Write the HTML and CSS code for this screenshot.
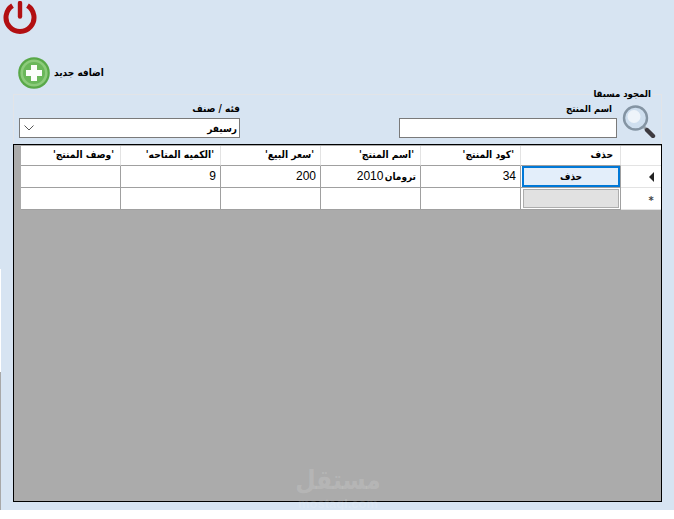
FILE: index.html
```html
<!DOCTYPE html>
<html lang="ar">
<head>
<meta charset="utf-8">
<title>المنتجات</title>
<link rel="stylesheet" href="styles.css">
</head>
<body>
<div class="window">
  <div class="edge"></div>
  <main class="content">
    <svg class="power" viewBox="0 0 34 34" aria-label="خروج">
      <path d="M9.500 4.700A14 14 0 1 0 24.500 4.700" fill="none" stroke="#b20f12" stroke-width="5"/>
      <line x1="17" y1="2" x2="17" y2="15.500" stroke="#b20f12" stroke-width="4.400" stroke-linecap="round"/>
    </svg>
    <div class="add">
      <svg class="add-icon" viewBox="0 0 32 32">
        <circle cx="16" cy="16" r="15.800" fill="#58a848"/>
        <circle cx="16" cy="16" r="13.600" fill="#8ccb7b"/>
        <circle cx="16" cy="16" r="11" fill="#6ab75a"/>
        <path d="M13 8h6v5h5v6h-5v5h-6v-5H8v-6h5z" fill="#fbfdfa"/>
      </svg>
      <span class="add-label" dir="rtl">اضافه جديد</span>
    </div>
    <section class="group">
      <span class="legend" dir="rtl">المجود مسبقا</span>
      <div class="controls">
        <div class="field field-category">
          <label class="label" dir="rtl">فئه / صنف</label>
          <div class="select">
            <svg class="chevron" viewBox="0 0 10 6"><path d="M0.500 0.500L5 5L9.500 0.500" fill="none" stroke="#555" stroke-width="1"/></svg>
            <span dir="rtl">رسيفر</span>
          </div>
        </div>
        <div class="search">
          <div class="field field-name">
            <label class="label label-name" dir="rtl">اسم المنتج</label>
            <div class="input"></div>
          </div>
          <svg class="lens" viewBox="0 0 35 34">
            <line x1="22" y1="23" x2="25" y2="26" stroke="#9aa3ab" stroke-width="3"/>
            <line x1="25" y1="26" x2="31" y2="32" stroke="#3d3a40" stroke-width="4.400" stroke-linecap="round"/>
            <circle cx="13.500" cy="14" r="11.500" fill="#cfdfef" stroke="#8494a3" stroke-width="2.400"/>
            <circle cx="12" cy="12.500" r="6.500" fill="#eef4fa"/>
          </svg>
        </div>
      </div>
    </section>
    <section class="grid-frame">
      <div class="grid">
        <div class="head" dir="rtl">'وصف المنتج'</div>
        <div class="head" dir="rtl">'الكميه المتاحه'</div>
        <div class="head" dir="rtl">'سعر البيع'</div>
        <div class="head" dir="rtl">'اسم المنتج'</div>
        <div class="head" dir="rtl">'كود المنتج'</div>
        <div class="head head-delete" dir="rtl">حذف</div>
        <div class="head head-corner"></div>

        <div class="cell"></div>
        <div class="cell num">9</div>
        <div class="cell num">200</div>
        <div class="cell cell-name" dir="rtl"><span class="ar">ترومان</span> 2010</div>
        <div class="cell num">34</div>
        <div class="cell cell-btn"><div class="selected" dir="rtl">حذف</div></div>
        <div class="rowhead"><span class="arrow"></span></div>

        <div class="cell"></div>
        <div class="cell"></div>
        <div class="cell"></div>
        <div class="cell"></div>
        <div class="cell"></div>
        <div class="cell cell-btn"><div class="newbtn"></div></div>
        <div class="rowhead"><span class="star">*</span></div>
      </div>
    </section>
    <div class="watermark" aria-hidden="true">
      <span class="wm-ar" dir="rtl">مستقل</span>
      <span class="wm-en">mostaql.com</span>
    </div>
  </main>
</div>
</body>
</html>
```

FILE: styles.css
```css
* { box-sizing: border-box; }
html, body { margin: 0; padding: 0; background: #fff; }
body { font-family: "DejaVu Sans Condensed", "DejaVu Sans", sans-serif; color: #000; }

.window {
  display: flex;
  width: 674px;
  height: 510px;
  background: #d7e4f2;
  overflow: hidden;
}
.edge {
  width: 1px;
  background: linear-gradient(to bottom,
    #d7e4f2 0, #d7e4f2 269px, #fff 269px, #fff 372px, #a8a8a8 372px, #a8a8a8 100%);
}
.content {
  position: relative;
  flex: 1;
  display: flex;
  flex-direction: column;
  align-items: flex-start;
}
.power { display: block; width: 34px; height: 34px; margin: 1px 0 0 2px; }
.add {
  display: flex;
  align-items: center;
  gap: 4px;
  margin: 22px 0 0 17px;
  height: 32px;
}
.add-icon { width: 32px; height: 32px; display: block; }
.add-label { font-size: 10px; font-weight: 700; line-height: 12px; }

.group {
  position: relative;
  width: 649px;
  margin: 5px 0 0 12px;
  border-top: 1px solid #e2e4e8;
  border-left: 1px solid #e2e4e8;
  border-right: 1px solid #e2e4e8;
  padding: 7px 4px 6px 5px;
}
.legend {
  position: absolute;
  right: 9px;
  top: -8px;
  font-size: 9.500px;
  font-weight: 700;
  line-height: 13px;
  background: #d7e4f2;
  padding: 0 1px;
}
.controls { display: flex; justify-content: space-between; align-items: flex-end; }
.field { display: flex; flex-direction: column; }
.field-category { width: 221px; }
.field-name { width: 218px; }
.label { font-size: 10px; font-weight: 700; line-height: 14px; height: 16px; text-align: right; }
.label-name { padding-right: 5px; font-size: 9.500px; }
.select {
  height: 20px;
  background: #fff;
  border: 1px solid #7a7a7a;
  display: flex;
  align-items: center;
  justify-content: space-between;
  padding: 0 2px 0 4px;
  font-size: 10px;
  font-weight: 700;
}
.chevron { width: 10px; height: 6px; display: block; }
.input { height: 20px; background: #fff; border: 1px solid #7a7a7a; }
.search { display: flex; align-items: flex-end; gap: 5px; }
.lens { width: 35px; height: 34px; display: block; }

.grid-frame {
  width: 649px;
  height: 358px;
  margin-left: 12px;
  background: #ababab;
  border: 1px solid #000;
  padding: 1px 0 0 7px;
}
.grid {
  display: grid;
  grid-template-columns: repeat(6, 100px) 40px;
  grid-template-rows: 20px 22px 22px;
}
.head {
  background: #fff;
  border-right: 1px solid #e3e3e3;
  border-bottom: 1px solid #a0a0a0;
  font-size: 10.200px;
  font-weight: 700;
  line-height: 17px;
  padding: 0 6px;
  text-align: right;
  white-space: nowrap;
  overflow: hidden;
}
.head-delete { padding-right: 7px; }
.head-corner { border-right: 0; border-bottom-color: #e3e3e3; }
.cell {
  background: #fff;
  border-right: 1px solid #a0a0a0;
  border-bottom: 1px solid #a0a0a0;
  font-family: "Liberation Sans", sans-serif;
  font-size: 12px;
  line-height: 21px;
  padding: 0 4px;
  text-align: right;
  white-space: nowrap;
}
.cell-name { word-spacing: -2px; }
.ar { font-family: "DejaVu Sans Condensed", "DejaVu Sans", sans-serif; font-size: 10px; font-weight: 700; }
.cell-btn { padding: 0; }
.selected {
  height: 21px;
  margin-left: 1px;
  background: #e3eefa;
  border: 2px solid #0078d7;
  font-family: "DejaVu Sans Condensed", "DejaVu Sans", sans-serif;
  font-size: 10px;
  font-weight: 700;
  line-height: 17px;
  text-align: center;
}
.newbtn {
  height: 19px;
  margin: 1px 1px 0 2px;
  background: #e1e1e1;
  border: 1px solid #adadad;
}
.rowhead {
  background: #fff;
  border-bottom: 1px solid #e3e3e3;
  display: flex;
  align-items: center;
  justify-content: center;
  padding-left: 20px;
}
.arrow {
  width: 0;
  height: 0;
  border-top: 5px solid transparent;
  border-bottom: 5px solid transparent;
  border-right: 5px solid #222;
}
.star { font-size: 11px; font-weight: 700; color: #444; line-height: 12px; padding-top: 5px; }

.watermark {
  position: absolute;
  left: 295px;
  top: 464px;
  width: 84px;
  display: flex;
  flex-direction: column;
  align-items: center;
  color: rgba(255, 255, 255, 0.15);
  pointer-events: none;
}
.wm-ar { font-size: 26px; font-weight: 700; line-height: 33px; }
.wm-en { font-family: "Liberation Sans", sans-serif; font-size: 13px; font-weight: 700; line-height: 13px; }
```
